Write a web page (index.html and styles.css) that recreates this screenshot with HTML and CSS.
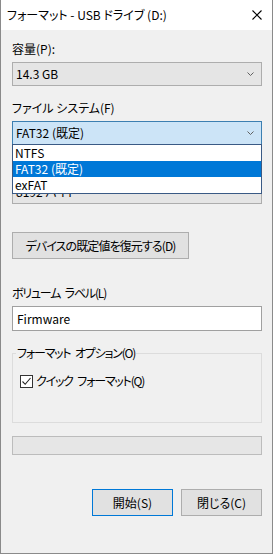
FILE: index.html
```html
<!DOCTYPE html>
<html lang="ja">
<head>
    <meta charset="UTF-8">
    <title>フォーマット - USB ドライブ (D:)</title>
    <link rel="stylesheet" href="styles.css">
</head>
<body>
    <div class="window">
        <div class="titlebar">
            <span class="title">フォーマット - USB ドライブ (D:)</span>
            <svg class="close" width="10" height="10" viewBox="0 0 10 10">
                <path d="M0.5 0.5 L9.5 9.5 M9.5 0.5 L0.5 9.5" stroke="#000" stroke-width="1.1" fill="none"/>
            </svg>
        </div>

        <div class="content">
            <div class="label first">容量(P):</div>
            <div class="combo">
                <span>14.3 GB</span>
                <svg class="chev" width="7" height="4" viewBox="0 0 7 4"><path d="M0.5 0.5 L3.5 3.5 L6.5 0.5" stroke="#606060" fill="none"/></svg>
            </div>

            <div class="label">ファイル システム(F)</div>
            <div class="combo-wrap">
                <div class="combo open">
                    <span>FAT32 (既定)</span>
                    <svg class="chev" width="7" height="4" viewBox="0 0 7 4"><path d="M0.5 0.5 L3.5 3.5 L6.5 0.5" stroke="#606060" fill="none"/></svg>
                </div>
                <ul class="dropdown">
                    <li>NTFS</li>
                    <li class="selected">FAT32 (既定)</li>
                    <li>exFAT</li>
                </ul>
            </div>

            <!-- covered by the open list -->
            <div class="label covered">アロケーション ユニット サイズ(A)</div>
            <div class="combo">
                <span>8192 バイト</span>
                <svg class="chev" width="7" height="4" viewBox="0 0 7 4"><path d="M0.5 0.5 L3.5 3.5 L6.5 0.5" stroke="#606060" fill="none"/></svg>
            </div>

            <button class="btn restore">デバイスの既定値を復元する(D)</button>

            <div class="label vol">ボリューム ラベル(L)</div>
            <div class="textbox">Firmware</div>

            <fieldset class="group">
                <legend>フォーマット オプション(O)</legend>
                <div class="check-row">
                    <span class="checkbox">
                        <svg width="11" height="11" viewBox="0 0 11 11"><path d="M1.5 5.5 L4.2 8.3 L9.5 2" stroke="#222" stroke-width="1.1" fill="none"/></svg>
                    </span>
                    <span class="check-text">クイック フォーマット(Q)</span>
                </div>
            </fieldset>

            <div class="progress"></div>

            <div class="actions">
                <button class="btn default">開始(S)</button>
                <button class="btn">閉じる(C)</button>
            </div>
        </div>
    </div>
</body>
</html>
```

FILE: styles.css
```css
body {
    margin: 0;
    background: #f0f0f0;
}
.window {
    width: 273px;
    height: 554px;
    box-sizing: border-box;
    border: 1px solid #8a8a8a;
    border-top: none;
    background: #f0f0f0;
    font-family: "Noto Sans CJK JP", sans-serif;
    font-size: 12px;
    font-feature-settings: "palt";
    color: #000;
    overflow: hidden;
}
.titlebar {
    height: 30px;
    background: #fff;
    display: flex;
    align-items: center;
    justify-content: space-between;
    padding: 0 10px 0 6px;
}
.title {
    line-height: 16px;
}
.content {
    padding: 0 10px 0 11px;
}
.label {
    line-height: 16px;
    margin-top: 14px;
    margin-bottom: 5px;
}
.label.first {
    margin-top: 11px;
}
.label.covered {
    visibility: hidden;
}
.label.vol {
    margin-top: 26px;
    letter-spacing: -1.2px;
    word-spacing: 3px;
}
.combo {
    height: 24px;
    box-sizing: border-box;
    border: 1px solid #adadad;
    background: #e5e5e5;
    display: flex;
    align-items: center;
    justify-content: space-between;
    padding: 0 7px 0 3px;
    line-height: 16px;
}
.combo.open {
    background: #cce4f7;
    border-color: #3c7fb1;
}
.combo-wrap {
    position: relative;
}
.dropdown {
    position: absolute;
    left: 0;
    right: 0;
    top: 23px;
    margin: 0;
    padding: 0;
    list-style: none;
    background: #fff;
    border: 1px solid #3a5a85;
    z-index: 2;
}
.dropdown li {
    height: 16px;
    line-height: 16px;
    padding-left: 2px;
}
.dropdown li.selected {
    background: #0078d7;
    color: #fff;
}
.btn {
    font-family: inherit;
    font-size: 12px;
    font-feature-settings: "palt";
    color: #000;
    background: #e1e1e1;
    border: 1px solid #adadad;
    height: 27px;
    padding: 0;
    line-height: 16px;
}
.btn.restore {
    display: block;
    width: 177px;
    margin-top: 28px;
    letter-spacing: -0.9px;
}
.btn.default {
    border-color: #0078d7;
}
.textbox {
    height: 25px;
    box-sizing: border-box;
    border: 1px solid #a0a0a0;
    background: #fff;
    padding: 0 4px;
    display: flex;
    align-items: center;
}
.group {
    margin: 14px 0 0;
    padding: 0 0 33px 7px;
    border: 1px solid #dcdcdc;
}
.group legend {
    padding: 0 1px;
    margin-left: -4px;
    line-height: 16px;
    letter-spacing: -1.2px;
    word-spacing: 3px;
}
.check-row {
    display: flex;
    align-items: center;
    gap: 3px;
    margin-top: 12px;
    line-height: 16px;
}
.check-text {
    letter-spacing: -1.2px;
    word-spacing: 3px;
}
.checkbox {
    width: 13px;
    height: 13px;
    box-sizing: border-box;
    border: 1px solid #333;
    background: #fff;
    display: flex;
    align-items: center;
    justify-content: center;
}
.progress {
    height: 19px;
    box-sizing: border-box;
    margin-top: 13px;
    border: 1px solid #bcbcbc;
    background: #e6e6e6;
}
.actions {
    display: flex;
    justify-content: flex-end;
    gap: 8px;
    margin-top: 34px;
}
.actions .btn {
    width: 81px;
}
```
